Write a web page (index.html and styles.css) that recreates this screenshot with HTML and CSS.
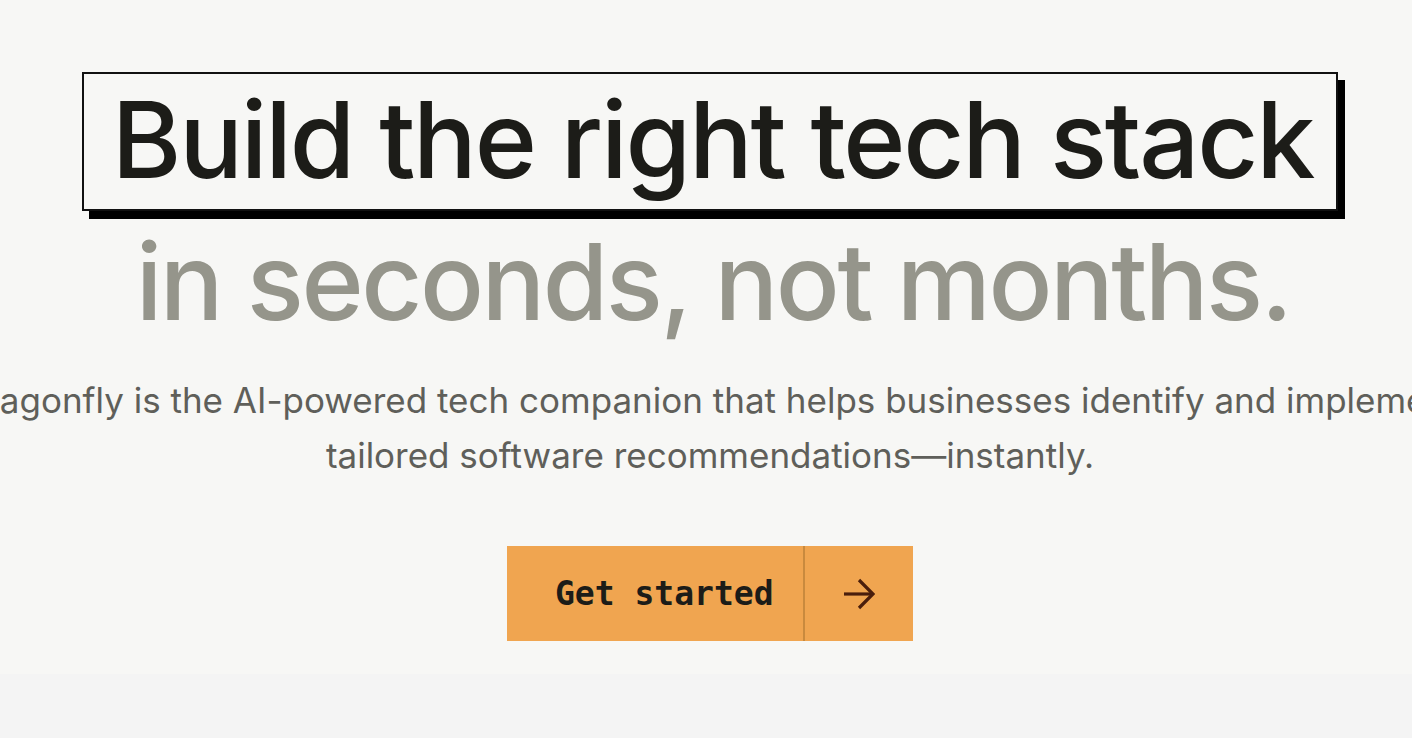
FILE: index.html
```html
<!DOCTYPE html>
<html lang="en">

<head>
    <meta charset="UTF-8">
    <meta name="viewport" content="width=device-width, initial-scale=1.0">
    <title>Dragonfly</title>
    <link rel="stylesheet" href="styles.css">
</head>

<body>
    <section class="hero">
        <h1 class="hero-title">
            <span class="title-box">Build the right tech stack</span>
            <span class="title-sub">in seconds, not months.</span>
        </h1>
        <div class="lead-wrap">
            <p class="lead">Dragonfly is the AI-powered tech companion that helps businesses identify and implement<br>tailored software recommendations—instantly.</p>
        </div>
        <a href="#" class="cta">
            <span class="cta-label">Get started</span>
            <span class="cta-icon">
                <svg width="32" height="32" viewBox="0 0 32 32" fill="none" stroke="currentColor" stroke-width="3.2">
                    <path d="M1 16h28"/>
                    <path d="M16 2l14 14-14 14"/>
                </svg>
            </span>
        </a>
    </section>
    <div class="band"></div>
</body>

</html>
```

FILE: styles.css
```css
*{
    margin: 0;
    padding: 0;
    box-sizing: border-box;
}
body{
    background: #f7f7f5;
    font-family: "Inter", "Liberation Sans", sans-serif;
    overflow: hidden;
}
.hero{
    display: flex;
    flex-direction: column;
    align-items: center;
    padding: 72px 0 33px 8px;
}
.hero-title{
    font-size: 106px;
    font-weight: 500;
    line-height: 1;
    letter-spacing: -2.2px;
    text-align: center;
    display: flex;
    flex-direction: column;
    align-items: center;
}
.title-box{
    display: block;
    border: 2px solid #111;
    box-shadow: 7px 8px 0 #000;
    padding: 13px 23px 16px 28px;
    color: #1c1c18;
}
.title-sub{
    display: block;
    color: #95958b;
    margin-top: 18px;
    margin-left: 6px;
    letter-spacing: -2.5px;
}
.lead-wrap{
    width: 100%;
    display: flex;
    justify-content: center;
    margin-top: 38px;
}
.lead{
    flex: none;
    width: max-content;
    font-size: 35px;
    line-height: 55px;
    color: #5f5f5a;
    text-align: center;
    white-space: nowrap;
}
.cta{
    display: flex;
    margin-top: 63px;
    height: 95px;
    background: #f0a550;
    text-decoration: none;
}
.cta-label{
    width: 298px;
    display: flex;
    align-items: center;
    padding-left: 48px;
    font-family: "DejaVu Sans Mono", monospace;
    font-weight: bold;
    font-size: 33px;
    color: #1c1c18;
    border-right: 2px solid #c98a3e;
}
.cta-icon{
    width: 108px;
    display: flex;
    align-items: center;
    justify-content: center;
    color: #4a1e0c;
}
.band{
    height: 80px;
    background: #f4f4f4;
}
```
